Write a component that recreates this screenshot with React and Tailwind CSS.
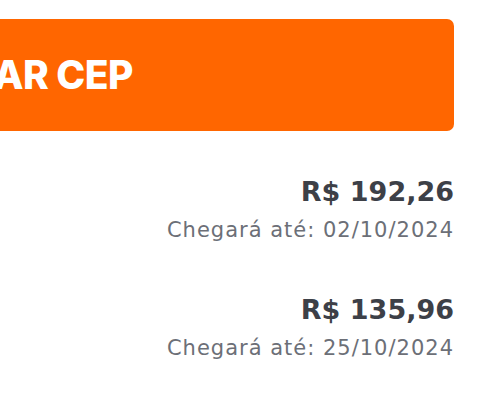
export default function App() {
  const fretes = [
    { preco: 'R$ 192,26', data: '02/10/2024' },
    { preco: 'R$ 135,96', data: '25/10/2024' },
  ];

  return (
    <div className="w-[500px] h-[412px] bg-white overflow-hidden pt-[19px] pr-[46px]" style={{ fontFamily: 'Inter, "Open Sans", sans-serif' }}>
      <button className="w-full h-[112px] flex items-center overflow-hidden rounded-r-[7px] bg-[#ff6600] text-white">
        <div className="w-[133px] shrink-0 flex justify-end">
          <span className="whitespace-nowrap text-[39px] font-extrabold tracking-[-0.5px]">CALCULAR CEP</span>
        </div>
      </button>

      <div className="mt-[45px] flex flex-col gap-[52px]" style={{ fontFamily: '"DejaVu Sans", sans-serif' }}>
        {fretes.map(f => (
          <div key={f.data} className="flex flex-col items-end">
            <div className="text-[27px] leading-[32px] font-bold text-[#3d4047]">{f.preco}</div>
            <div className="text-[21px] leading-[24px] mt-[10px] text-[#6c6f77] tracking-[1px]">Chegará até: {f.data}</div>
          </div>
        ))}
      </div>
    </div>
  );
}
